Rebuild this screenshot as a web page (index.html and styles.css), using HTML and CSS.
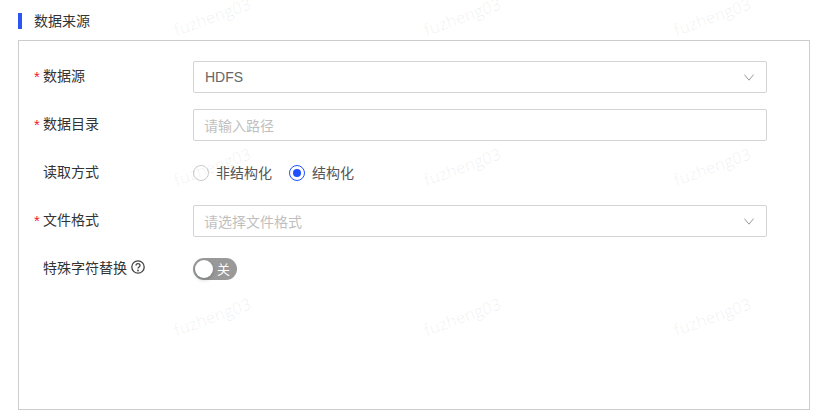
FILE: index.html
```html
<html>
<head>
  <meta charset="utf-8">
  <link rel="stylesheet" href="styles.css">
</head>
<body>
  <div class="page">
    <div class="section-title">数据来源</div>
    <div class="panel">
      <div class="form-row">
        <div class="form-label"><span class="required">*</span>数据源</div>
        <div class="field select">
          <span class="value">HDFS</span>
          <svg class="arrow" viewBox="0 0 10 7"><path d="M0.4 0.6 L5 6.2 L9.6 0.6"/></svg>
        </div>
      </div>
      <div class="form-row">
        <div class="form-label"><span class="required">*</span>数据目录</div>
        <div class="field"><span class="placeholder">请输入路径</span></div>
      </div>
      <div class="form-row">
        <div class="form-label">读取方式</div>
        <div class="radio-group">
          <span class="radio"></span><span class="radio-text">非结构化</span>
          <span class="radio checked"></span><span class="radio-text">结构化</span>
        </div>
      </div>
      <div class="form-row">
        <div class="form-label"><span class="required">*</span>文件格式</div>
        <div class="field select">
          <span class="placeholder">请选择文件格式</span>
          <svg class="arrow" viewBox="0 0 10 7"><path d="M0.4 0.6 L5 6.2 L9.6 0.6"/></svg>
        </div>
      </div>
      <div class="form-row">
        <div class="form-label">特殊字符替换
          <svg class="help" viewBox="0 0 14 14">
            <circle cx="7" cy="7" r="6.2"/>
            <path d="M5 5.6 C5 3 9 3 9 5.5 C9 7 7 6.9 7 8.6"/>
            <circle class="dot" cx="7" cy="10.5" r="0.9"/>
          </svg>
        </div>
        <div class="switch"><span class="knob"></span><span class="switch-text">关</span></div>
      </div>
    </div>
    <div class="watermarks">
      <span>fuzheng03</span><span>fuzheng03</span><span>fuzheng03</span><span>fuzheng03</span>
      <span>fuzheng03</span><span>fuzheng03</span><span>fuzheng03</span><span>fuzheng03</span>
      <span>fuzheng03</span><span>fuzheng03</span><span>fuzheng03</span><span>fuzheng03</span>
    </div>
  </div>
</body>
</html>
```
FILE: styles.css
```css
html, body {
  margin: 0;
  padding: 0;
  background: #fff;
  font-family: "Liberation Sans", "Noto Sans CJK SC", sans-serif;
  font-size: 14px;
  color: #333;
}
.page {
  position: relative;
  width: 817px;
  height: 419px;
  overflow: hidden;
  padding: 13px 7px 0 18px;
  box-sizing: border-box;
}
.section-title {
  height: 16px;
  line-height: 16px;
  border-left: 4px solid #2b55f5;
  padding-left: 12px;
  color: #333;
}
.panel {
  margin-top: 11px;
  height: 370px;
  box-sizing: border-box;
  border: 1px solid #ccc;
  padding: 20px 42px 0 15px;
}
.form-row {
  display: flex;
  align-items: center;
  height: 32px;
  margin-bottom: 16px;
}
.form-label {
  width: 159px;
  flex: none;
  display: flex;
  align-items: center;
  padding: 0 0 4px 9px;
  box-sizing: border-box;
  position: relative;
}
.required {
  position: absolute;
  left: 0;
  top: 3px;
  color: #f5192a;
  font-size: 15px;
}
.field {
  flex: 1;
  height: 32px;
  box-sizing: border-box;
  border: 1px solid #d4d4d4;
  border-radius: 2px;
  padding: 0 11px;
  display: flex;
  align-items: center;
  justify-content: space-between;
}
.value {
  color: #666;
}
.placeholder {
  color: #bfbfbf;
  margin-left: -1px;
}
.arrow {
  width: 10px;
  height: 7px;
  fill: none;
  stroke: #999;
  stroke-width: 1;
  margin-right: 1px;
}
.radio-group {
  display: flex;
  align-items: center;
}
.radio {
  width: 16px;
  height: 16px;
  box-sizing: border-box;
  border: 1px solid #ccc;
  border-radius: 50%;
  display: flex;
  align-items: center;
  justify-content: center;
  margin-right: 7px;
}
.radio.checked {
  border-color: #1f4fff;
}
.radio.checked::after {
  content: "";
  width: 8px;
  height: 8px;
  border-radius: 50%;
  background: #1f4fff;
}
.radio-text {
  margin-right: 17px;
  padding-bottom: 2px;
  color: #555;
}
.help {
  width: 14px;
  height: 14px;
  margin-left: 4px;
  fill: none;
  stroke: #444;
  stroke-width: 1.3;
}
.help .dot {
  fill: #444;
  stroke: none;
}
.switch {
  width: 44px;
  height: 22px;
  border-radius: 11px;
  background: #999;
  display: flex;
  align-items: center;
  padding-left: 2px;
  box-sizing: border-box;
}
.knob {
  width: 18px;
  height: 18px;
  border-radius: 50%;
  background: #fff;
  box-shadow: 0 2px 4px rgba(0, 35, 11, 0.2);
}
.switch-text {
  color: #fff;
  font-size: 13px;
  margin-left: 4px;
  padding-bottom: 2px;
}
/* watermark layer lies over the whole form */
.watermarks {
  position: absolute;
  left: -78px;
  top: 0;
  display: grid;
  grid-template-columns: repeat(4, 250px);
  grid-auto-rows: 150px;
  pointer-events: none;
}
.watermarks span {
  display: block;
  width: 80px;
  height: 20px;
  line-height: 20px;
  margin-top: 7px;
  font-size: 16.5px;
  color: rgba(0, 0, 0, 0.06);
  font-family: "Open Sans", sans-serif;
  transform: rotate(-20deg);
  transform-origin: center;
}
```
